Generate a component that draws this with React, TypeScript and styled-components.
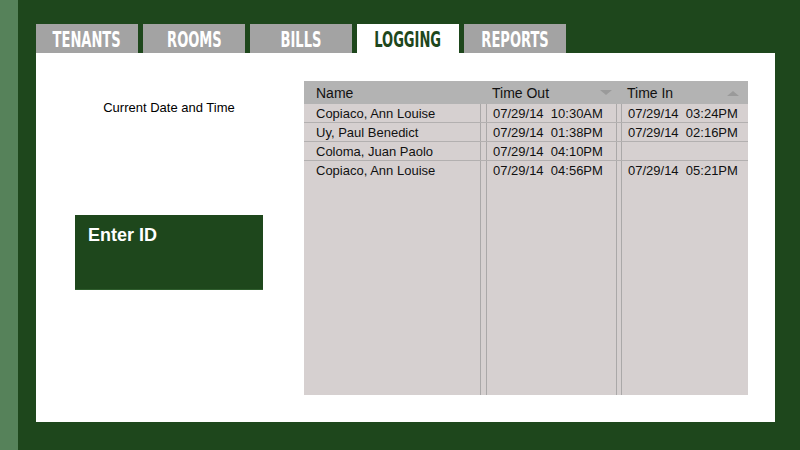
import styled, { createGlobalStyle } from 'styled-components';

const GlobalStyle = createGlobalStyle`
  html, body {
    margin: 0;
    padding: 0;
  }
  body {
    font-family: 'Liberation Sans', Arial, sans-serif;
  }
`;

type LogEntry = {
  name: string;
  timeOut: string;
  timeIn: string;
};

const tabs = ['TENANTS', 'ROOMS', 'BILLS', 'LOGGING', 'REPORTS'];

const logs: LogEntry[] = [
  { name: 'Copiaco, Ann Louise', timeOut: '07/29/14  10:30AM', timeIn: '07/29/14  03:24PM' },
  { name: 'Uy, Paul Benedict', timeOut: '07/29/14  01:38PM', timeIn: '07/29/14  02:16PM' },
  { name: 'Coloma, Juan Paolo', timeOut: '07/29/14  04:10PM', timeIn: '' },
  { name: 'Copiaco, Ann Louise', timeOut: '07/29/14  04:56PM', timeIn: '07/29/14  05:21PM' },
];

const SortArrow = ({ dir }: { dir: 'up' | 'down' }) => (
  <Arrow width="12" height="6" viewBox="0 0 12 6">
    {dir === 'down' ? <polygon points="0,0 12,0 6,5" /> : <polygon points="0,6 12,6 6,1" />}
  </Arrow>
);

const App = () => {
  return (
    <Screen>
      <GlobalStyle />
      <SideStrip />
      <Main>
        <TabBar>
          {tabs.map((tab) => (
            <Tab key={tab} $active={tab === 'LOGGING'}>
              <TabLabel>{tab}</TabLabel>
            </Tab>
          ))}
        </TabBar>

        <Panel>
          <LeftColumn>
            <DateLabel>Current Date and Time</DateLabel>
            <IdBox>Enter ID</IdBox>
          </LeftColumn>

          <Table>
            <HeaderRow>
              <HeadCell $first>Name</HeadCell>
              <span />
              <HeadCell $padRight={4}>
                Time Out
                <SortArrow dir="down" />
              </HeadCell>
              <span />
              <HeadCell $padRight={9}>
                Time In
                <SortArrow dir="up" />
              </HeadCell>
            </HeaderRow>

            <Body>
              {logs.map((log, i) => (
                <Row key={i} $last={i === logs.length - 1}>
                  <NameCell>{log.name}</NameCell>
                  <Gutter />
                  <TimeCell>{log.timeOut}</TimeCell>
                  <Gutter />
                  <TimeCell>{log.timeIn}</TimeCell>
                </Row>
              ))}
              <FillerRow>
                <span />
                <Gutter />
                <span />
                <Gutter />
                <span />
              </FillerRow>
            </Body>
          </Table>
        </Panel>
      </Main>
    </Screen>
  );
};

export default App;

const Screen = styled.div`
  display: flex;
  width: 800px;
  height: 450px;
  background: #1e471c;
  overflow: hidden;
`;

const SideStrip = styled.div`
  width: 18px;
  flex-shrink: 0;
  background: #56825a;
`;

const Main = styled.div`
  flex: 1;
  display: flex;
  flex-direction: column;
  padding: 24px 25px 28px 18px;
`;

const TabBar = styled.div`
  display: flex;
  gap: 5px;
  height: 29px;
`;

const Tab = styled.div<{ $active?: boolean }>`
  width: 102px;
  display: flex;
  align-items: center;
  justify-content: center;
  padding-top: 3px;
  box-sizing: border-box;
  background: ${({ $active }) => ($active ? '#ffffff' : '#a3a3a3')};
  color: ${({ $active }) => ($active ? '#1e471c' : '#ffffff')};
`;

const TabLabel = styled.span`
  display: inline-block;
  font-family: 'DejaVu Sans Condensed', 'Liberation Sans', sans-serif;
  font-weight: 700;
  font-size: 22px;
  line-height: 22px;
  transform: scaleX(0.66);
  white-space: nowrap;
`;

const Panel = styled.div`
  flex: 1;
  display: flex;
  background: #ffffff;
  padding: 28px 27px 27px 0;
`;

const LeftColumn = styled.div`
  width: 268px;
  padding-right: 2px;
  box-sizing: border-box;
  flex-shrink: 0;
  display: flex;
  flex-direction: column;
  align-items: center;
`;

const DateLabel = styled.div`
  margin-top: 19px;
  font-size: 13px;
  line-height: 15px;
  color: #000000;
`;

const IdBox = styled.div`
  margin-top: 100px;
  width: 188px;
  height: 75px;
  box-sizing: border-box;
  background: #1e471c;
  border-bottom: 1px solid #2f5d2d;
  padding: 9px 13px;
  color: #ffffff;
  font-weight: 700;
  font-size: 18px;
  line-height: 22px;
`;

const Table = styled.div`
  flex: 1;
  display: flex;
  flex-direction: column;
  background: #d6d0d0;
`;

const columns = '176px 7px 129px 6px 1fr';

const HeaderRow = styled.div`
  display: grid;
  grid-template-columns: ${columns};
  height: 23px;
  background: #b3b3b3;
  font-size: 14px;
  color: #111111;
`;

const HeadCell = styled.div<{ $first?: boolean; $padRight?: number }>`
  display: flex;
  align-items: center;
  justify-content: space-between;
  padding-left: ${({ $first }) => ($first ? '12px' : '5px')};
  padding-right: ${({ $padRight }) => $padRight ?? 0}px;
`;

const Arrow = styled.svg`
  fill: #9a9a9a;
  margin-top: 1px;
`;

const Body = styled.div`
  flex: 1;
  display: flex;
  flex-direction: column;
`;

const Row = styled.div<{ $last?: boolean }>`
  display: grid;
  grid-template-columns: ${columns};
  height: 19px;
  box-sizing: border-box;
  border-bottom: ${({ $last }) => ($last ? 'none' : '1px solid #b3b0b0')};
  font-size: 13px;
  color: #111111;
`;

const FillerRow = styled.div`
  flex: 1;
  display: grid;
  grid-template-columns: ${columns};
`;

const NameCell = styled.div`
  display: flex;
  align-items: center;
  padding-left: 12px;
  white-space: pre;
`;

const TimeCell = styled.div`
  display: flex;
  align-items: center;
  padding-left: 6px;
  white-space: pre;
`;

const Gutter = styled.div`
  box-sizing: border-box;
  border-left: 1px solid #aaa8a8;
  border-right: 1px solid #aaa8a8;
`;
